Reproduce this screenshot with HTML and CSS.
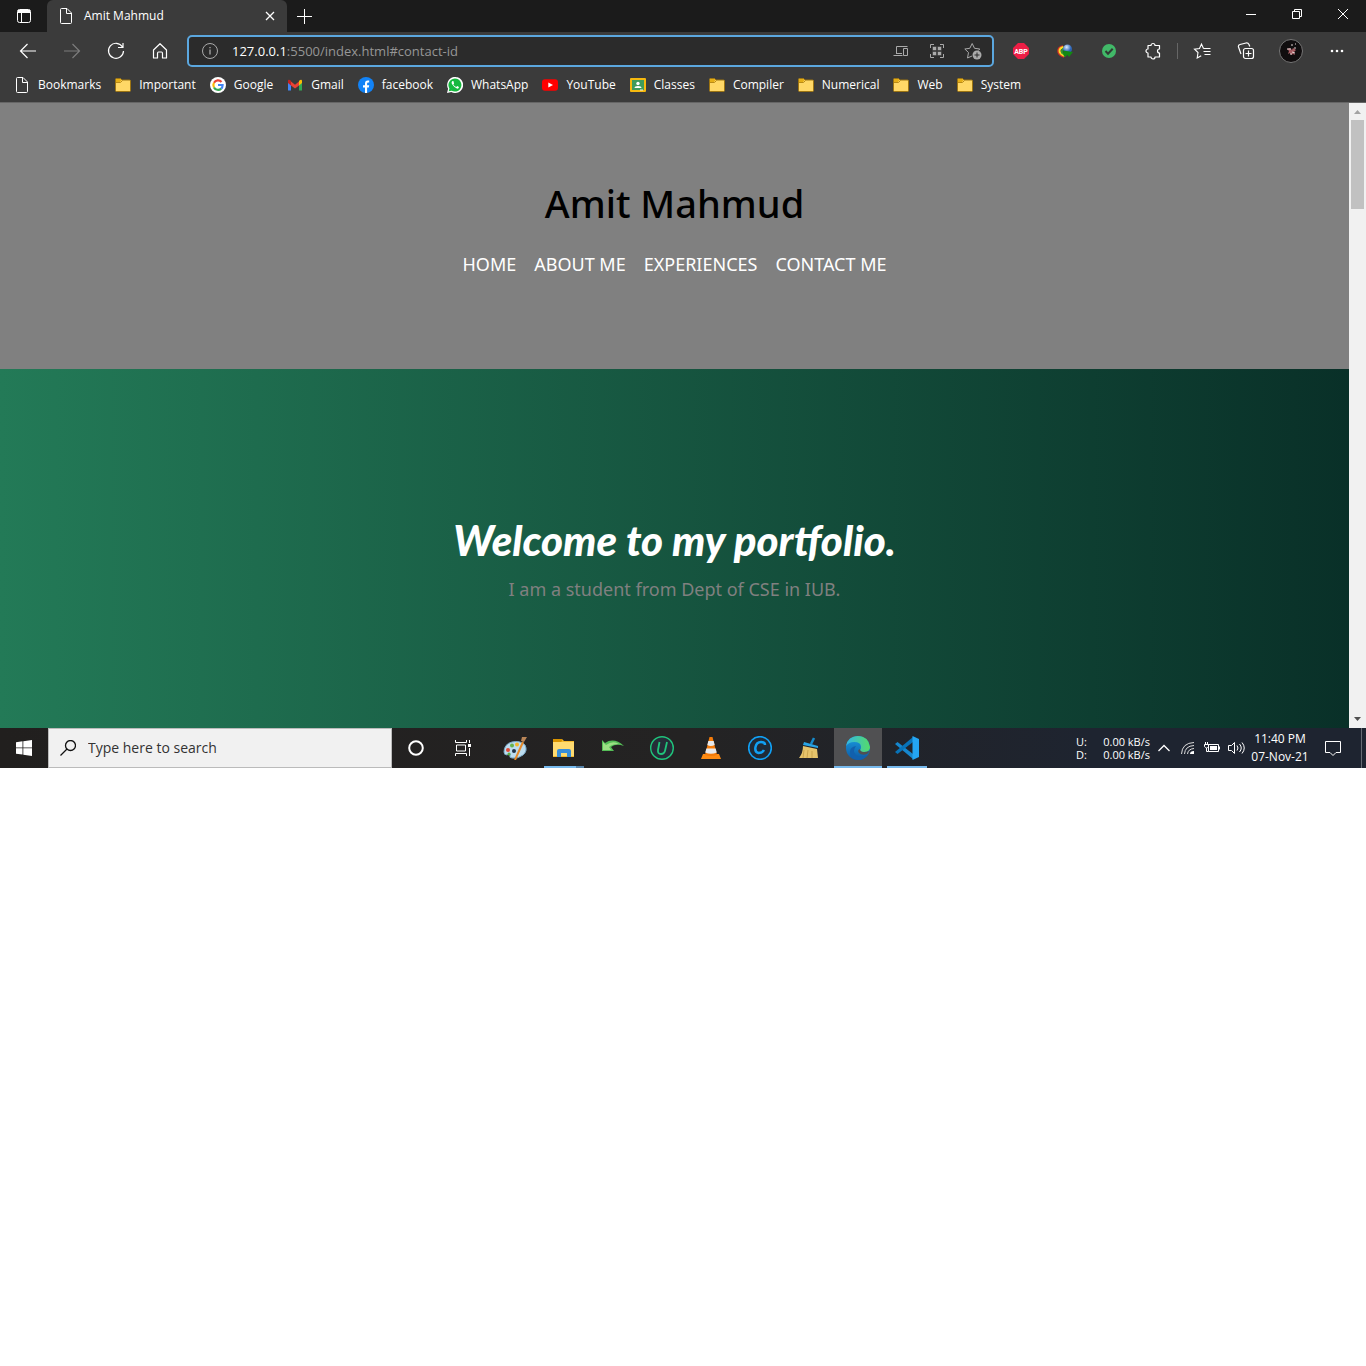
FILE: index.html
```html
<!DOCTYPE html>
<html lang="en">
<head>
<meta charset="utf-8">
<meta name="viewport" content="width=device-width, initial-scale=1">
<title>Amit Mahmud</title>
<link rel="stylesheet" href="styles.css">
</head>
<body>
<svg class="defs" aria-hidden="true">
  <defs>
    <symbol id="folder" viewBox="0 0 16 16"><path d="M.5 2.500q0-1 1-1h4l1.500 1.500h7.500q1 0 1 1v9.500q0 1-1 1h-13q-1 0-1-1z" fill="#ffd867" stroke="#9c7412"/><path d="M1 2h4.500l1 1.300-1.500 1.700H1z" fill="#e5ae17"/><path d="M1 5.500h4.500l2-2" fill="none" stroke="#b98a16"/></symbol>
    <symbol id="page" viewBox="0 0 16 16"><path d="M2.500 1.500q0-1 1-1h5.500l4.500 4.500v9.500q0 1-1 1h-9q-1 0-1-1zM8.500.5v5h5" fill="none" stroke="currentColor"/></symbol>
    <linearGradient id="edgeTop" x1="0" y1="0" x2="1" y2="0"><stop offset="0" stop-color="#32b5e8"/><stop offset="1" stop-color="#55dc67"/></linearGradient>
    <linearGradient id="edgeLow" x1="0" y1="0" x2="0" y2="1"><stop offset="0" stop-color="#1b9de2"/><stop offset="1" stop-color="#0c59a4"/></linearGradient>
    <radialGradient id="globe" cx=".4" cy=".3"><stop offset="0" stop-color="#dcecff"/><stop offset="1" stop-color="#2c63b4"/></radialGradient>
  </defs>
</svg>

<div class="desktop">
  <div class="titlebar">
    <button class="tab-menu" aria-label="Tab actions"><svg width="16" height="16" viewBox="0 0 16 16" fill="none" stroke="currentColor"><rect x="1.500" y="1.500" width="13" height="13" rx="2"/><path d="M1.500 4.500h13M5.500 4.500v10"/><path d="M2 3h12" stroke-width="2"/></svg></button>
    <div class="tab">
      <svg width="16" height="16"><use href="#page"/></svg>
      <span class="tab-title">Amit Mahmud</span>
      <button class="tab-close" aria-label="Close tab"><svg width="10" height="10" viewBox="0 0 10 10" stroke="currentColor" stroke-width="1.300"><path d="M1 1l8 8M9 1l-8 8"/></svg></button>
    </div>
    <button class="new-tab" aria-label="New tab"><svg width="15" height="15" viewBox="0 0 15 15" stroke="currentColor"><path d="M7.500 0v15M0 7.500h15"/></svg></button>
    <div class="window-controls">
      <button aria-label="Minimize"><svg width="10" height="10" viewBox="0 0 10 10" stroke="currentColor"><path d="M0 5.500h10"/></svg></button>
      <button aria-label="Restore"><svg width="10" height="10" viewBox="0 0 10 10" fill="none" stroke="currentColor"><path d="M.5 2.500h7v7h-7zM2.500 2.500v-2h7v7h-2"/></svg></button>
      <button aria-label="Close"><svg width="10" height="10" viewBox="0 0 10 10" stroke="currentColor"><path d="M0 0l10 10M10 0L0 10"/></svg></button>
    </div>
  </div>

  <div class="toolbar">
    <button class="tool" aria-label="Back"><svg width="18" height="16" viewBox="0 0 18 16" fill="none" stroke="currentColor" stroke-width="1.200"><path d="M17 8H2M8.500 1L1.500 8l7 7"/></svg></button>
    <button class="tool dim" aria-label="Forward"><svg width="18" height="16" viewBox="0 0 18 16" fill="none" stroke="currentColor" stroke-width="1.200"><path d="M1 8h15M9.500 1l7 7-7 7"/></svg></button>
    <button class="tool" aria-label="Refresh"><svg width="18" height="18" viewBox="0 0 18 18" fill="none" stroke="currentColor" stroke-width="1.200"><path d="M15.500 5A7.500 7.500 0 1 0 16.500 9M16 1v4.500h-5"/></svg></button>
    <button class="tool" aria-label="Home"><svg width="18" height="18" viewBox="0 0 18 18" fill="none" stroke="currentColor" stroke-width="1.200"><path d="M2.500 8L9 1.700 15.500 8v8h-4v-4.500q0-1.500-1-1.500h-3q-1 0-1 1.500v4.500h-4z" stroke-linejoin="round"/></svg></button>
    <form class="address">
      <svg width="18" height="18" viewBox="0 0 18 18" fill="none" stroke="currentColor"><circle cx="9" cy="9" r="7.500"/><path d="M9 7.500v5M9 5v1.300" stroke-width="1.300"/></svg>
      <label for="url">127.0.0.1</label><input id="url" type="text" value=":5500/index.html#contact-id">
      <button type="button" aria-label="Send to devices"><svg width="16" height="14" viewBox="0 0 16 14" fill="none" stroke="currentColor"><path d="M3.500 9.500v-7h11M.5 11.500h9M10.500 4.500h4v7h-4zM3 9.500h6"/></svg></button>
      <button type="button" aria-label="QR code"><svg width="16" height="16" viewBox="0 0 16 16" fill="none" stroke="currentColor"><path d="M1.500 5V1.500H5M11 1.500h3.500V5M14.500 11v3.500H11M5 14.500H1.500V11"/><path d="M3.500 3.500h4v4h-4zM8.500 3.500h4v4h-4zM3.500 8.500h4v4h-4zM8.500 8.500h4v4h-4z" fill="currentColor" stroke="#2b2b2b" stroke-width=".5"/></svg></button>
      <button type="button" aria-label="Add to favorites"><svg width="18" height="18" viewBox="0 0 18 18" fill="none" stroke="currentColor"><path d="M8 14l-4.500 2 1-5.500L.8 7l5-.7L8.200 1.500l2.300 4.800 5.300.7-1.500 1.500"/><circle cx="13" cy="13" r="4.500" fill="currentColor" stroke="none"/><path d="M13 10.500v5M10.500 13h5" stroke="#2b2b2b"/></svg></button>
    </form>
    <button class="tool" aria-label="Adblock Plus"><svg width="16" height="16" viewBox="0 0 16 16"><path d="M5 0h6l5 5v6l-5 5H5l-5-5V5z" fill="#ed1e45"/><text x="8" y="11" class="abp">ABP</text></svg></button>
    <button class="tool" aria-label="Download manager"><svg width="18" height="18" viewBox="0 0 18 18"><path d="M7 4Q2 5 2 9t6 6" fill="none" stroke="#d92f25" stroke-width="1.500"/><path d="M7.500 5Q3.500 6 3.500 9T9 14" fill="none" stroke="#ffdc26" stroke-width="2"/><path d="M8 6Q5 8 6 11l4 3" fill="none" stroke="#2fa52f" stroke-width="1.500"/><circle cx="11.500" cy="7" r="4.500" fill="url(#globe)"/><path d="M7 8.500l10 1.500-4 5-1.500-2L8 15z" fill="#128a12"/></svg></button>
    <button class="tool" aria-label="Protection"><svg width="16" height="16" viewBox="0 0 16 16"><circle cx="8" cy="8" r="7" fill="#41b968"/><path d="M4.500 8l2.500 2.700 4.700-5" fill="none" stroke="#303b34" stroke-width="2"/></svg></button>
    <button class="tool" aria-label="Extensions"><svg width="18" height="18" viewBox="0 0 18 18" fill="none" stroke="currentColor" stroke-width="1.200"><path d="M4 3.500h3a2 2 0 0 1 4 0h4.500V7a2 2 0 1 0 0 4v4H11a2 2 0 0 1-4 0H4v-4a2 2 0 0 1 0-4z" stroke-linejoin="round"/></svg></button>
    <span class="divider"></span>
    <button class="tool" aria-label="Favorites"><svg width="18" height="18" viewBox="0 0 18 18" fill="none" stroke="currentColor" stroke-width="1.100"><path d="M10.500 6.500L8.500 2 6.500 6.500l-5 .7L5 10.500 4.200 16l4-2.300M10.500 6.500h7M10.500 9.500h7M11.500 12.500h6"/></svg></button>
    <button class="tool" aria-label="Collections"><svg width="18" height="18" viewBox="0 0 18 18" fill="none" stroke="currentColor" stroke-width="1.200"><rect x="6.500" y="6.500" width="10" height="10" rx="2"/><path d="M11.500 8.500v6M8.500 11.500h6M4 12L1.500 5q-.5-2 1.500-2.500l6-1.500q2-.5 3 1.500l.8 2"/></svg></button>
    <button class="tool wide" aria-label="Profile"><svg width="24" height="24" viewBox="0 0 24 24"><circle cx="12" cy="12" r="11.500" fill="#100d0e" stroke="#777"/><path d="M8 10l3-1 2 2 1-2 3 2-2 2 1 3-2-1-2 1-1-2-2 1 1-3z" fill="#a45b61"/><path d="M12 6h2M16 5h1M8 10h4M13 13l3 1M11 15h2M15 9h2" stroke="#ddd1d0"/></svg></button>
    <button class="tool wide" aria-label="Settings and more"><svg width="16" height="4" viewBox="0 0 16 4" fill="currentColor"><circle cx="3" cy="2" r="1.300"/><circle cx="8" cy="2" r="1.300"/><circle cx="13" cy="2" r="1.300"/></svg></button>
  </div>

  <nav class="bookmarks" aria-label="Bookmarks">
    <a href="#"><svg width="16" height="16"><use href="#page"/></svg>Bookmarks</a>
    <a href="#"><svg width="16" height="16"><use href="#folder"/></svg>Important</a>
    <a href="#"><svg width="16" height="16" viewBox="0 0 16 16"><circle cx="8" cy="8" r="8" fill="#fff"/><g fill="none" stroke-width="2.200"><path d="M11.500 5A4.600 4.600 0 0 0 4 5.800" stroke="#ea4335"/><path d="M4 5.800a4.600 4.600 0 0 0 0 4.600" stroke="#fbbc05"/><path d="M4 10.400a4.600 4.600 0 0 0 7.200 1.200" stroke="#34a853"/><path d="M8 8h4.600q0 2.400-1.400 3.600" stroke="#4285f4"/></g></svg>Google</a>
    <a href="#"><svg width="16" height="16" viewBox="0 0 16 16"><path d="M1 4v9.500h3V7z" fill="#4285f4"/><path d="M12 7v6.500h3V4z" fill="#34a853"/><path d="M4 4.500L8 7.700l4-3.200v4L8 11.500 4 8.500z" fill="#ea4335"/><path d="M1 4q0-2 2-1l1 1v4.500L1 6z" fill="#c5221f"/><path d="M12 4l1-1q2-1 2 1v2l-3 2.500z" fill="#fbbc04"/></svg>Gmail</a>
    <a href="#"><svg width="16" height="16" viewBox="0 0 16 16"><circle cx="8" cy="8" r="8" fill="#1283f7"/><path d="M7 16v-5.500H5V8.200h2V6.500Q7 3.500 9.800 3.500h1.400v2h-1Q9.100 5.500 9.100 6.600v1.600h2.100l-.4 2.300H9.100V16z" fill="#fff"/></svg>facebook</a>
    <a href="#"><svg width="16" height="16" viewBox="0 0 16 16"><path d="M0 16l1.100-4.200A8 8 0 1 1 4.300 15z" fill="#fff"/><path d="M1.700 14.300l.7-2.800a6.500 6.500 0 1 1 2.300 2.200z" fill="#16b93e"/><path d="M5.500 4q-1.700 1.200-.2 3.600 2.300 3.500 5 4.100 1.500-.1 1.700-1.700L10.200 9l-1 1.100Q7.300 9.300 6.300 7.400l.8-1L6.400 4z" fill="#fff"/></svg>WhatsApp</a>
    <a href="#"><svg width="16" height="16" viewBox="0 0 16 16"><rect y="2.300" width="16" height="11.500" rx="3" fill="#f00"/><path d="M6.300 5.500L11 8l-4.700 2.500z" fill="#fff"/></svg>YouTube</a>
    <a href="#"><svg width="16" height="16" viewBox="0 0 16 16"><rect y="1" width="16" height="14" rx="1" fill="#f6b90f"/><path d="M2 3h12v10H2z" fill="#3f9b5c"/><circle cx="8" cy="6.500" r="1.700" fill="#fff"/><path d="M4.500 11q0-2 3.500-2t3.500 2z" fill="#fff"/><path d="M10 12.500h3v1h-3z" fill="#eee"/></svg>Classes</a>
    <a href="#"><svg width="16" height="16"><use href="#folder"/></svg>Compiler</a>
    <a href="#"><svg width="16" height="16"><use href="#folder"/></svg>Numerical</a>
    <a href="#"><svg width="16" height="16"><use href="#folder"/></svg>Web</a>
    <a href="#"><svg width="16" height="16"><use href="#folder"/></svg>System</a>
  </nav>

  <div class="viewport">
    <main class="site">
      <header class="site-header">
        <h1>Amit Mahmud</h1>
        <nav class="site-nav">
          <a href="#">HOME</a><a href="#">ABOUT ME</a><a href="#">EXPERIENCES</a><a href="#">CONTACT ME</a>
        </nav>
      </header>
      <section class="hero">
        <h2>Welcome to my portfolio.</h2>
        <p>I am a student from Dept of CSE in IUB.</p>
      </section>
    </main>
    <div class="scrollbar">
      <svg width="17" height="17" viewBox="0 0 17 17"><path d="M5 11l3.500-4 3.500 4z" fill="#a3a3a3"/></svg>
      <span class="thumb"></span>
      <svg class="scroll-down" width="17" height="17" viewBox="0 0 17 17"><path d="M5 6h7L8.500 10z" fill="#505050"/></svg>
    </div>
  </div>

  <footer class="taskbar">
    <button class="app" aria-label="Start"><svg width="16" height="16" viewBox="0 0 16 16" fill="#fff"><path d="M0 2.200L6.500 1.300v6.200H0zM7.300 1.200L16 0v7.500H7.300zM0 8.300h6.500v6.300L0 13.700zM7.300 8.300H16V16l-8.700-1.200z"/></svg></button>
    <label class="search"><svg width="16" height="16" viewBox="0 0 16 16" fill="none" stroke="#111" stroke-width="1.300"><circle cx="10.500" cy="5.500" r="5"/><path d="M7 9l-6.500 6.500"/></svg><input type="text" placeholder="Type here to search"></label>
    <button class="app" aria-label="Cortana"><svg width="16" height="16" viewBox="0 0 16 16" fill="none" stroke="#fff" stroke-width="2"><circle cx="8" cy="8" r="6.800"/></svg></button>
    <button class="app" aria-label="Task view"><svg width="18" height="16" viewBox="0 0 18 16" fill="none" stroke="#fff"><path d="M.5 0v2.500h11V0M.5 16v-2.500h11V16M1.500 5h9v6h-9zM14.500 0v3M14.500 8v8"/><path d="M13 4h3v3h-3z" fill="#fff" stroke="none"/></svg></button>
    <div class="pinned">
      <button class="app" aria-label="Paint"><svg width="24" height="24" viewBox="0 0 24 24"><path d="M1 16Q1 8 9 6t13 3q3 6-2 10t-11 3q-3 0-2-3t-3 0q-3 0-3-3z" fill="#bcdcef" stroke="#7aa9c7"/><circle cx="5" cy="14" r="2" fill="#df4937"/><circle cx="9" cy="9.500" r="2" fill="#67b34b"/><circle cx="14" cy="8.500" r="2" fill="#f3b62b"/><circle cx="6" cy="18" r="1.500" fill="#57ad45"/><circle cx="11" cy="15" r="2" fill="#203145"/><path d="M12 24L20 6" stroke="#e58a2b" stroke-width="2"/><path d="M18 5l1-4 5 0-3 5z" fill="#b98557"/></svg></button>
      <button class="app running grouped" aria-label="File Explorer"><svg width="24" height="24" viewBox="0 0 24 24"><path d="M1 3h9l2 2h10v16H1z" fill="#f4b92d"/><path d="M1 3h9v2l-2 2H1z" fill="#d99400"/><path d="M1 6h21v14H1z" fill="#ffdb70"/><path d="M5 21v-6q0-2 2-2h10q2 0 2 2v6h-4v-4H9v4z" fill="#388ed9"/></svg></button>
      <button class="app" aria-label="Revo"><svg width="24" height="24" viewBox="0 0 24 24"><path d="M1 15V4l3 3q9-6 19 3-8-3-13 1l3 4z" fill="#55bd57"/><path d="M2 14V6l3 3q7-5 13-1-7 0-10 3l2 3z" fill="#9be084"/></svg></button>
      <button class="app" aria-label="Uninstaller"><svg width="24" height="24" viewBox="0 0 24 24" fill="none" stroke="#20c47b"><circle cx="12" cy="12" r="11.300" stroke-width="1.400" fill="#252d38"/><path d="M9.500 6L8 14q-.5 4 3 4t4.200-4L17 6" stroke-width="1.800"/></svg></button>
      <button class="app" aria-label="VLC"><svg width="22" height="24" viewBox="0 0 22 24"><path d="M3 18h16l2 5H1z" fill="#ff8b12"/><path d="M9.500 1h3L17 19q-6 2-12 0z" fill="#f47b0a"/><path d="M8.300 5h5.400l1 4q-4 2-7.400 0zM6.400 12.500h9.200l1.200 4q-6 2.500-11.600 0z" fill="#e8e9eb"/></svg></button>
      <button class="app" aria-label="Cleaner"><svg width="24" height="24" viewBox="0 0 24 24" fill="none" stroke="#11a0f4"><circle cx="12" cy="12" r="11.300" stroke-width="1.600" fill="#202a36"/><path d="M17 9q0-3-4-3-4.500 0-5.500 5t3 6q4 0 5.500-3" stroke-width="2.500"/></svg></button>
      <button class="app" aria-label="Sweeper"><svg width="24" height="24" viewBox="0 0 24 24"><path d="M14 8l3-6" stroke="#168bcc" stroke-width="2.500"/><path d="M7 6l14 4v2L6 9z" fill="#29a4e5"/><path d="M6 10l14 3 1 9H2q4-5 4-12z" fill="#e5c36b"/><path d="M7 14l-1 8M11 14l-1 8M15 15v7" stroke="#c9a34c"/></svg></button>
      <button class="app active" aria-label="Microsoft Edge"><svg width="24" height="24" viewBox="0 0 24 24"><circle cx="12" cy="12" r="12" fill="url(#edgeLow)"/><path d="M0 10Q2 0 12 0t12 11q0 5-6 5-4 0-4-2 1-1 1-3 0-5-7-5-5 0-8 4z" fill="url(#edgeTop)"/><path d="M10 10q-4 5 0 9t12-.5Q18 24 12 24 4 23 4 16q0-5 6-6z" fill="#1260ad"/><path d="M14 13q0 3 4 3 3 0 5-1 0 2-2 3-5 2-8-1-2-3 1-4z" fill="#505052"/></svg></button>
      <button class="app running" aria-label="Visual Studio Code"><svg width="24" height="24" viewBox="0 0 24 24"><path d="M0 8l2.500-2L18 18v5z" fill="#1687ce"/><path d="M0 16l2.500 2L18 6V1z" fill="#0873b8"/><path d="M17.500 0L24 3v18l-6.500 3z" fill="#24a5f2"/></svg></button>
    </div>
    <div class="tray">
      <div class="netspeed"><span>U:</span><span>0.00 kB/s</span><span>D:</span><span>0.00 kB/s</span></div>
      <button class="tray-icon" aria-label="Hidden icons"><svg width="12" height="8" viewBox="0 0 12 8" fill="none" stroke="#fff" stroke-width="1.300"><path d="M.5 7L6 1.500 11.500 7"/></svg></button>
      <button class="tray-icon" aria-label="Network"><svg width="14" height="14" viewBox="0 0 14 14" fill="none" stroke="#ddd"><path d="M.5 13Q1 2 13 1.500M3.500 13Q4 5 13 4.500M6.500 13Q7 8 13 7.500"/><path d="M9 13q0-3 4-3v3z" fill="#fff" stroke="none"/></svg></button>
      <button class="tray-icon" aria-label="Battery"><svg width="16" height="14" viewBox="0 0 16 14" fill="none" stroke="#fff"><path d="M4.500 3.500h10v7h-10zM15.500 5.500v3M1.500 1v2M3.500 1v2M.5 3.500h4v2q-1 1.500-2 1.500t-2-1.500zM2.500 7v3.500h2"/><path d="M6 5h7v4H6z" fill="#fff" stroke="none"/></svg></button>
      <button class="tray-icon" aria-label="Volume"><svg width="17" height="14" viewBox="0 0 17 14" fill="none" stroke="#fff"><path d="M.5 4.500h3l3-3v11l-3-3h-3zM9 4.500q2 2.500 0 5M11.500 3q3.500 4 0 8M14 1.500q4.500 5.500 0 11"/></svg></button>
      <div class="clock"><span>11:40 PM</span><span>07-Nov-21</span></div>
      <button class="notice" aria-label="Notifications"><svg width="16" height="17" viewBox="0 0 16 17" fill="none" stroke="#fff"><path d="M.5 1.500h15v11H11l-3 3-3-3H.5z"/></svg></button>
      <span class="show-desktop"></span>
    </div>
  </footer>
</div>
</body>
</html>
```
FILE: styles.css
```css
* { box-sizing: border-box; }
body { margin: 0; background: #fff; font: 12px/16px "Open Sans", "Noto Sans", sans-serif; color: #fff; }
button { margin: 0; padding: 0; border: 0; background: none; color: inherit; font: inherit; display: flex; align-items: center; justify-content: center; flex: none; }
input { border: 0; background: none; padding: 0; margin: 0; outline: 0; min-width: 0; flex: 1; font: inherit; color: inherit; }
a { color: inherit; text-decoration: none; }
svg { display: block; flex: none; }
.defs { position: absolute; width: 0; height: 0; }
.desktop { display: flex; flex-direction: column; }

.titlebar { display: flex; height: 32px; background: #1b1b1b; }
.tab-menu { width: 47px; }
.tab { display: flex; align-items: center; gap: 10px; width: 240px; padding: 0 12px 0 11px; background: #3b3b3b; border-radius: 6px 6px 0 0; }
.tab-title { flex: 1; }
.tab-close { width: 10px; }
.new-tab { width: 35px; }
.window-controls { display: flex; margin-left: auto; }
.window-controls button { width: 46px; height: 28px; }

.toolbar { display: flex; align-items: center; height: 37px; padding: 0 6px; background: #3b3b3b; }
.tool { width: 44px; height: 32px; }
.wide { width: 46px; }
.dim { color: #7c7c7c; }
.abp { font: 700 7px Roboto, sans-serif; fill: #fff; text-anchor: middle; }
.divider { width: 1px; height: 16px; margin: 0 2px; background: #666; }
.address { display: flex; align-items: center; flex: 1; min-width: 0; height: 32px; margin: 0 5px; padding: 0 10px 0 12px; border: 2px solid #5ba7df; border-radius: 5px; background: #2b2b2b; font-size: 13px; line-height: 20px; color: #969696; }
.address label { margin-left: 13px; color: #fff; }
.address svg { color: #aaa; }
.address button { width: 18px; margin-left: 18px; }

.bookmarks { display: flex; align-items: center; gap: 14px; height: 34px; padding: 0 14px 2px; background: #3b3b3b; border-bottom: 1px solid #666; overflow: hidden; }
.bookmarks a { display: flex; align-items: center; gap: 8px; white-space: nowrap; }

.viewport { display: flex; }
.site { flex: 1; min-width: 0; font-family: "Noto Sans", sans-serif; text-align: center; }
.site-header { padding: 70px 16px 91px; background: #808080; }
.site-header h1 { margin: 0; color: #000; font-size: 38px; line-height: 60px; font-weight: 500; }
.site-nav { display: flex; justify-content: center; flex-wrap: wrap; gap: 18px; margin-top: 18px; font-size: 18px; line-height: 27px; }
.hero { padding: 135px 16px 125px; background: linear-gradient(to right, #237a57, #093028); }
.hero h2 { margin: 0; font: italic 900 42px/72px Lato, cursive; }
.hero p { margin: 0; font-size: 18px; line-height: 27px; color: #808080; }
.scrollbar { display: flex; flex-direction: column; width: 17px; background: #f1f1f1; }
.thumb { height: 89px; margin: 0 2px; background: #c1c1c1; }
.scroll-down { margin-top: auto; }

.taskbar { display: flex; height: 40px; background: linear-gradient(to right, #211f1e, #242323 50%, #1e2430 80%, #1e2430); }
.app { width: 48px; height: 40px; }
.search { display: flex; align-items: center; gap: 12px; width: 344px; padding: 0 11px; background: #f1f1f1; border: 1px solid #bbb; font-size: 14px; line-height: 20px; }
.search input::placeholder { color: #333; opacity: 1; }
.pinned { display: flex; gap: 1px; margin-left: 3px; }
.running { width: 40px; margin: 0 4px; border-bottom: 2px solid #76b9ed; padding-top: 2px; }
.grouped { border-image: linear-gradient(to right, #76b9ed 78%, #5682a8 78%) 2; }
.active { background: #505052; border-bottom: 2px solid #76b9ed; padding-top: 2px; }
.tray { display: flex; align-items: center; margin-left: auto; white-space: nowrap; }
.netspeed { display: grid; grid-template-columns: 24px 50px; margin-right: 2px; font-size: 11px; line-height: 13px; text-align: right; }
.netspeed span:nth-child(odd) { text-align: left; }
.tray-icon { width: 24px; height: 40px; }
.clock { display: flex; flex-direction: column; width: 64px; text-align: center; line-height: 18px; }
.notice { width: 42px; height: 40px; }
.show-desktop { width: 5px; height: 40px; margin-left: 7px; border-left: 1px solid #666b73; }
```
